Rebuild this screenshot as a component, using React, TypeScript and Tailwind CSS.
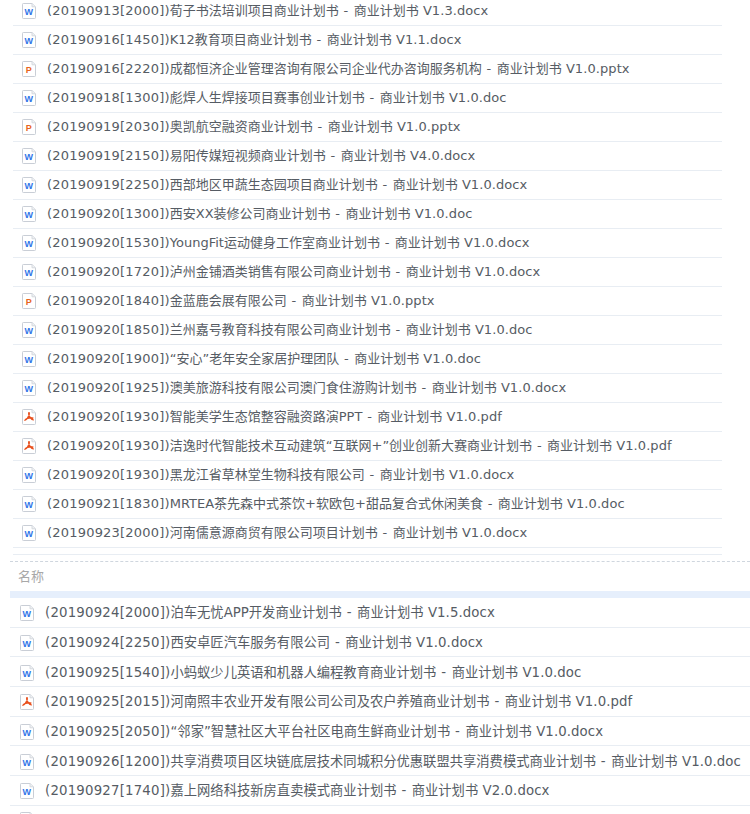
import React from "react";

type Kind = "w" | "p" | "pdf" | "blank";

function FileIcon({ kind }: { kind: Kind }) {
  return (
    <svg width="14" height="16" viewBox="0 0 14 16" className="shrink-0">
      <path d="M1.3 .5H10L13.5 3.8V14.7a.8.8 0 0 1-.8.8H1.3a.8.8 0 0 1-.8-.8V1.3a.8.8 0 0 1 .8-.8Z" fill="#fff" stroke="#c9ced6" />
      <path d="M10 .5V3.8H13.5" fill="#eef0f3" stroke="#d5d9df" />
      {kind === "w" && (
        <text x="6.8" y="11.6" textAnchor="middle" fontSize="9" fontWeight="700" fill="#2f74e8" fontFamily="'Liberation Sans', sans-serif">W</text>
      )}
      {kind === "p" && (
        <text x="6.8" y="11.6" textAnchor="middle" fontSize="9" fontWeight="700" fill="#e8641e" fontFamily="'Liberation Sans', sans-serif">P</text>
      )}
      {kind === "pdf" && (
        <path d="M7 3.2C6.2 4.6 7.2 7 8.2 8.5 9.2 9.9 10.6 11 11.8 10.8M7 3.2C7.8 4.6 6.8 7 5.8 8.5 5 9.9 3.4 11.7 2.4 11.4M3 10.8C5 9.2 9 8.5 11.4 9.1" fill="none" stroke="#e8501e" strokeWidth="1.3" />
      )}
    </svg>
  );
}

const list1: [Kind, string][] = [
  ["w", "(20190913[2000])荀子书法培训项目商业计划书 - 商业计划书 V1.3.docx"],
  ["w", "(20190916[1450])K12教育项目商业计划书 - 商业计划书 V1.1.docx"],
  ["p", "(20190916[2220])成都恒济企业管理咨询有限公司企业代办咨询服务机构 - 商业计划书 V1.0.pptx"],
  ["w", "(20190918[1300])彪焊人生焊接项目赛事创业计划书 - 商业计划书 V1.0.doc"],
  ["p", "(20190919[2030])奥凯航空融资商业计划书 - 商业计划书 V1.0.pptx"],
  ["w", "(20190919[2150])易阳传媒短视频商业计划书 - 商业计划书 V4.0.docx"],
  ["w", "(20190919[2250])西部地区甲蔬生态园项目商业计划书 - 商业计划书 V1.0.docx"],
  ["w", "(20190920[1300])西安XX装修公司商业计划书 - 商业计划书 V1.0.doc"],
  ["w", "(20190920[1530])YoungFit运动健身工作室商业计划书 - 商业计划书 V1.0.docx"],
  ["w", "(20190920[1720])泸州金铺酒类销售有限公司商业计划书 - 商业计划书 V1.0.docx"],
  ["p", "(20190920[1840])金蓝鹿会展有限公司 - 商业计划书 V1.0.pptx"],
  ["w", "(20190920[1850])兰州嘉号教育科技有限公司商业计划书 - 商业计划书 V1.0.doc"],
  ["w", "(20190920[1900])“安心”老年安全家居护理团队 - 商业计划书 V1.0.doc"],
  ["w", "(20190920[1925])澳美旅游科技有限公司澳门食住游购计划书 - 商业计划书 V1.0.docx"],
  ["pdf", "(20190920[1930])智能美学生态馆整容融资路演PPT - 商业计划书 V1.0.pdf"],
  ["pdf", "(20190920[1930])洁逸时代智能技术互动建筑“互联网+”创业创新大赛商业计划书 - 商业计划书 V1.0.pdf"],
  ["w", "(20190920[1930])黑龙江省草林堂生物科技有限公司 - 商业计划书 V1.0.docx"],
  ["w", "(20190921[1830])MRTEA茶先森中式茶饮+软欧包+甜品复合式休闲美食 - 商业计划书 V1.0.doc"],
  ["w", "(20190923[2000])河南儒意源商贸有限公司项目计划书 - 商业计划书 V1.0.docx"],
];

const list2: [Kind, string][] = [
  ["w", "(20190924[2000])泊车无忧APP开发商业计划书 - 商业计划书 V1.5.docx"],
  ["w", "(20190924[2250])西安卓匠汽车服务有限公司 - 商业计划书 V1.0.docx"],
  ["w", "(20190925[1540])小蚂蚁少儿英语和机器人编程教育商业计划书 - 商业计划书 V1.0.doc"],
  ["pdf", "(20190925[2015])河南照丰农业开发有限公司公司及农户养殖商业计划书 - 商业计划书 V1.0.pdf"],
  ["w", "(20190925[2050])“邻家”智慧社区大平台社区电商生鲜商业计划书 - 商业计划书 V1.0.docx"],
  ["w", "(20190926[1200])共享消费项目区块链底层技术同城积分优惠联盟共享消费模式商业计划书 - 商业计划书 V1.0.doc"],
  ["w", "(20190927[1740])嘉上网络科技新房直卖模式商业计划书 - 商业计划书 V2.0.docx"],
];

function Name({ text }: { text: string }) {
  const m = text.match(/^(\(\d+\[\d+\]\))(.*)( - )(商业计划书)( V.*)$/);
  if (!m) return <span className="whitespace-pre">{text}</span>;
  return (
    <span className="whitespace-pre">
      <span className="tracking-[0.2px]">{m[1]}</span>
      {m[2]}
      <span className="tracking-[0.65px]">{m[3]}</span>
      {m[4]}
      <span className="tracking-[0.08px]">{m[5]}</span>
    </span>
  );
}

export default function App() {
  return (
    <div className="h-[814px] w-[750px] overflow-hidden bg-white font-['DejaVu_Sans','Noto_Sans_CJK_SC',sans-serif] text-[13px] text-[#565c64]">
      <div className="-mt-[3px] ml-[13px] mr-[28px]">
        {list1.map(([k, t], i) => (
          <div key={i} className="flex h-[29px] items-center gap-[11px] border-b border-[#e8edf3] pl-[9px]">
            <FileIcon kind={k} />
            <Name text={t} />
          </div>
        ))}
        <div className="h-[7px] border-b border-[#e8edf3]" />
      </div>
      <div className="mt-[6px] ml-[10px] h-px border-t border-dashed border-[#cfd6de]" />
      <div className="ml-[18px] flex h-[29px] items-center text-[#a8a8a8]">名称</div>
      <div className="ml-[10px] h-[7px] bg-[#e6effc]" />
      <div className="ml-[10px] text-[13.3px]">
        {list2.map(([k, t], i) => (
          <div key={i} className="flex h-[29.67px] items-center gap-[11px] border-b border-[#e8edf3] pl-[10px] pt-[2px]">
            <FileIcon kind={k} />
            <Name text={t} />
          </div>
        ))}
        <div className="flex h-[29px] items-center pl-[10px]">
          <FileIcon kind="blank" />
        </div>
      </div>
    </div>
  );
}
